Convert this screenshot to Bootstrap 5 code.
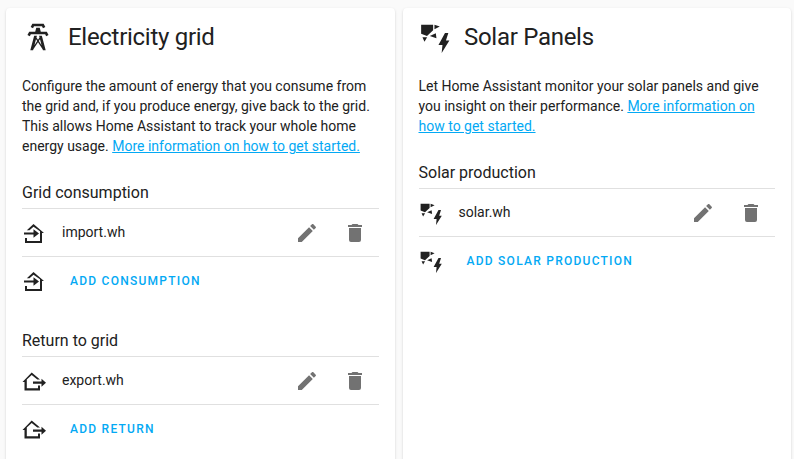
<!DOCTYPE html>
<html lang="en"><head><meta charset="utf-8">
<link href="https://cdn.jsdelivr.net/npm/bootstrap@5.3.0/dist/css/bootstrap.min.css" rel="stylesheet">
<style>
html,body{height:459px;overflow:hidden}
body{background:#fafafa;font-family:Roboto,sans-serif;color:#212121;font-size:14px;line-height:20px}
.board{padding:8px 6px 0;gap:7.5px;height:459px;overflow:hidden}
.panel-box{width:389px;height:470px;flex:none;background:#fff;border-radius:4px;box-shadow:0 2px 1px -1px rgba(0,0,0,.2),0 1px 1px 0 rgba(0,0,0,.14),0 1px 3px 0 rgba(0,0,0,.12);padding:16px}
.panel-solar{width:388.25px}
.panel-solar .head h2{margin-left:13.5px}
.head{height:26px;margin-bottom:26px}
.head svg{width:32px;height:32px;flex:none}
.head h2{font:400 24px/32px Roboto,sans-serif;letter-spacing:-.012em;margin:0 0 0 14px;color:#212121}
.intro{margin:0}
.intro a{color:#03a9f4}
.sec-title{font:400 16px/24px Roboto,sans-serif;margin:25px 0 3px;height:24px}
.rowline{height:48px;border-top:1px solid #e0e0e0}
.rowline svg.lead-ic{width:24px;height:24px;flex:none;fill:#212121}
.rowline .nm{margin-left:16px;flex:1;margin-bottom:2px}
.act{width:24px;height:24px;fill:#727272;flex:none}
.act-end{margin-right:12px}
.add-link{font:500 12px/16px Roboto,sans-serif;letter-spacing:1.25px;color:#03a9f4;margin-left:24px;text-transform:uppercase}
</style></head><body>
<svg width="0" height="0" class="d-none">
<symbol id="i-in" viewBox="0 0 24 24"><path d="M11.5 3 22 12H20V22H3V17H5V20H18V10.2L11.5 5.7 7.5 9.2H4.8Z"/><path d="M2 11.5H11.5V8.3L17 12.5 11.5 16.7V13.5H2Z"/></symbol>
<symbol id="i-out" viewBox="0 0 24 24"><path d="M9.7 3.5 18 10.5H15.3L9.7 6 4.8 10.5V19.2H16V16.5H18V21.5H2.5V13H.5Z"/><path d="M11 12.6H19.5V9.7L24 13.7 19.5 17.7V14.8H11Z"/></symbol>
<symbol id="i-sun" viewBox="0 0 24 24"><path d="M1.6 2.75H10.6V7L6 11.2 1.6 9.5ZM11.6 2.75 15.6 4.2 11.6 6.25ZM12.6 9.25 8.1 11.25 13.1 13ZM2.6 12.25H6.1L4.1 15.5ZM19.5 9H22L20.2 14.7H22.8L17 24 17.6 18H14.6Z"/></symbol>
<symbol id="i-edit" viewBox="0 0 24 24"><path d="M20.71,7.04C21.1,6.65 21.1,6 20.71,5.63L18.37,3.29C18,2.9 17.35,2.9 16.96,3.29L15.12,5.12L18.87,8.87M3,17.25V21H6.75L17.81,9.93L14.06,6.18L3,17.25Z"/></symbol>
<symbol id="i-del" viewBox="0 0 24 24"><path d="M19,4H15.5L14.5,3H9.5L8.5,4H5V6H19M6,19A2,2 0 0,0 8,21H16A2,2 0 0,0 18,19V7H6V19Z"/></symbol>
</svg>
<div class="board d-flex">
<section class="panel-box">
<div class="head d-flex align-items-center">
<svg viewBox="0 0 24 24" fill="#212121"><path d="M8.28,5.45L6.5,4.55L7.76,2H16.24L17.5,4.55L15.72,5.45L15,4H9L8.28,5.45M18.62,8H14.09L13.3,5H10.7L9.91,8H5.38L4.1,10.55L5.89,11.44L6.62,10H17.38L18.1,11.44L19.89,10.55L18.62,8M17.77,22H15.7L15.46,21.1L12,15.9L8.53,21.1L8.3,22H6.23L9.12,11H11.19L10.83,12.35L12,14.1L13.16,12.35L12.81,11H14.88L17.77,22M11.4,15L10.5,13.65L9.32,18.13L11.4,15M14.68,18.12L13.5,13.64L12.6,15L14.68,18.12Z"/></svg>
<h2>Electricity grid</h2></div>
<p class="intro">Configure the amount of energy that you consume from the grid and, if you produce energy, give back to the grid. This allows Home Assistant to track your whole home energy usage. <a href="#">More information on how to get started.</a></p>
<h3 class="sec-title">Grid consumption</h3>
<div class="rowline d-flex align-items-center"><svg class="lead-ic"><use href="#i-in"/></svg><span class="nm">import.wh</span><svg class="act me-4"><use href="#i-edit"/></svg><svg class="act act-end"><use href="#i-del"/></svg></div>
<div class="rowline d-flex align-items-center"><svg class="lead-ic"><use href="#i-in"/></svg><span class="add-link">Add consumption</span></div>
<h3 class="sec-title">Return to grid</h3>
<div class="rowline d-flex align-items-center"><svg class="lead-ic"><use href="#i-out"/></svg><span class="nm">export.wh</span><svg class="act me-4"><use href="#i-edit"/></svg><svg class="act act-end"><use href="#i-del"/></svg></div>
<div class="rowline d-flex align-items-center"><svg class="lead-ic"><use href="#i-out"/></svg><span class="add-link">Add return</span></div>
</section>
<section class="panel-box panel-solar">
<div class="head d-flex align-items-center">
<svg viewBox="0 0 24 24" fill="#212121"><use href="#i-sun"/></svg>
<h2>Solar Panels</h2></div>
<p class="intro">Let Home Assistant monitor your solar panels and give you insight on their performance. <a href="#">More information on how to get started.</a></p>
<h3 class="sec-title">Solar production</h3>
<div class="rowline d-flex align-items-center"><svg class="lead-ic"><use href="#i-sun"/></svg><span class="nm">solar.wh</span><svg class="act me-4"><use href="#i-edit"/></svg><svg class="act act-end"><use href="#i-del"/></svg></div>
<div class="rowline d-flex align-items-center"><svg class="lead-ic"><use href="#i-sun"/></svg><span class="add-link">Add solar production</span></div>
</section>
</div>
</body></html>
